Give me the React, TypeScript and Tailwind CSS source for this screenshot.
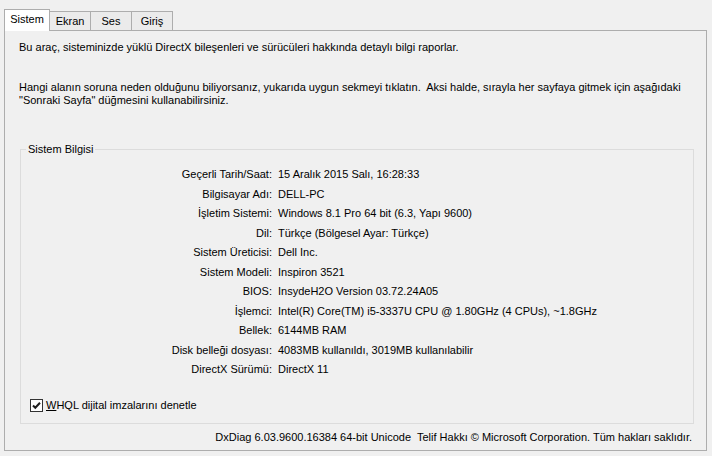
import React from "react";

const rows: [string, string][] = [
  ["Geçerli Tarih/Saat:", "15 Aralık 2015 Salı, 16:28:33"],
  ["Bilgisayar Adı:", "DELL-PC"],
  ["İşletim Sistemi:", "Windows 8.1 Pro 64 bit (6.3, Yapı 9600)"],
  ["Dil:", "Türkçe (Bölgesel Ayar: Türkçe)"],
  ["Sistem Üreticisi:", "Dell Inc."],
  ["Sistem Modeli:", "Inspiron 3521"],
  ["BIOS:", "InsydeH2O Version 03.72.24A05"],
  ["İşlemci:", "Intel(R) Core(TM) i5-3337U CPU @ 1.80GHz (4 CPUs), ~1.8GHz"],
  ["Bellek:", "6144MB RAM"],
  ["Disk belleği dosyası:", "4083MB kullanıldı, 3019MB kullanılabilir"],
  ["DirectX Sürümü:", "DirectX 11"],
];

export default function App() {
  return (
    <div
      className="w-[712px] h-[456px] bg-[#f0f0f0] text-[11px] text-black overflow-hidden"
      style={{ fontFamily: '"Liberation Sans", Arial, sans-serif' }}
    >
      {/* Tab strip */}
      <div className="flex items-end pl-[4px] pt-[9px] h-[31px] relative z-10">
        <div className="w-[46px] h-[22px] bg-white border border-b-0 border-[#adadad] flex items-start justify-center pt-[3px] leading-[13px]">
          Sistem
        </div>
        <div className="w-[41px] h-[19px] mb-px bg-[#ebebeb] border border-l-0 border-b-0 border-[#adadad] flex items-center justify-center leading-[13px]">
          Ekran
        </div>
        <div className="w-[41px] h-[19px] mb-px bg-[#ebebeb] border border-l-0 border-b-0 border-[#adadad] flex items-center justify-center leading-[13px]">
          Ses
        </div>
        <div className="w-[41px] h-[19px] mb-px bg-[#ebebeb] border border-l-0 border-b-0 border-[#adadad] flex items-center justify-center leading-[13px]">
          Giriş
        </div>
      </div>

      {/* Tab page */}
      <div className="ml-[4px] -mt-px w-[703px] h-[421px] border border-[#adadad] bg-[#f0f0f0] px-[14px] pt-[10px] leading-[13px]">
        <p>Bu araç, sisteminizde yüklü DirectX bileşenleri ve sürücüleri hakkında detaylı bilgi raporlar.</p>
        <p className="mt-[27px] whitespace-pre">
          {"Hangi alanın soruna neden olduğunu biliyorsanız, yukarıda uygun sekmeyi tıklatın.  Aksi halde, sırayla her sayfaya gitmek için aşağıdaki"}
          <br />
          {"\"Sonraki Sayfa\" düğmesini kullanabilirsiniz."}
        </p>

        {/* Group box */}
        <div className="relative mt-[42px] ml-px w-[674px] border border-[#dcdcdc] pt-[15px] pb-[11px]">
          <span className="absolute -top-[7px] left-[5px] px-[2px] bg-[#f0f0f0] leading-[13px]">
            Sistem Bilgisi
          </span>
          <div className="grid grid-cols-[251px_1fr] gap-x-[6px]">
            {rows.map(([k, v]) => (
              <React.Fragment key={k}>
                <div className="text-right leading-[19.5px] h-[19.5px]">{k}</div>
                <div className="leading-[19.5px] h-[19.5px] whitespace-nowrap">{v}</div>
              </React.Fragment>
            ))}
          </div>
          <div className="mt-[19px] ml-[9px] flex items-center h-[13px] gap-[3px]">
            <span className="w-[13px] h-[13px] border border-[#333333] bg-white flex items-center justify-center">
              <svg width="11" height="11" viewBox="0 0 11 11">
                <path d="M2 5.5 L4.3 7.8 L9 2.8" fill="none" stroke="#1e1e1e" strokeWidth="2" />
              </svg>
            </span>
            <span className="leading-[13px]">
              <span className="underline">W</span>HQL dijital imzalarını denetle
            </span>
          </div>
        </div>

        <div className="mt-[7px] pr-[0px] text-right whitespace-pre leading-[13px]">
          {"DxDiag 6.03.9600.16384 64-bit Unicode  Telif Hakkı © Microsoft Corporation. Tüm hakları saklıdır."}
        </div>
      </div>
    </div>
  );
}
